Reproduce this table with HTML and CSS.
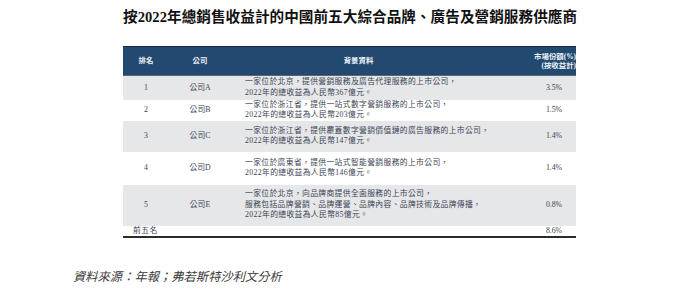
FILE: index.html
```html
<!DOCTYPE html>
<html lang="zh-Hant">
<head>
<meta charset="utf-8">
<link rel="stylesheet" href="styles.css">
</head>
<body>
<div class="page">
  <div class="block">
    <h1 class="title">按2022年總銷售收益計的中國前五大綜合品牌、廣告及營銷服務供應商</h1>
    <table class="tbl">
      <colgroup>
        <col class="c-rank"><col class="c-co"><col class="c-bg"><col class="c-share">
      </colgroup>
      <thead>
        <tr>
          <th class="ctr">排名</th>
          <th class="ctr">公司</th>
          <th class="ctr bg-h">背景資料</th>
          <th class="share-h">市場份額(%)<br>(按收益計)</th>
        </tr>
      </thead>
      <tbody>
        <tr class="gray h24">
          <td class="ctr">1</td><td class="ctr">公司A</td>
          <td class="desc">一家位於北京，提供營銷服務及廣告代理服務的上市公司，<br>2022年的總收益為人民幣367億元。</td>
          <td class="val">3.5%</td>
        </tr>
        <tr class="h21">
          <td class="ctr">2</td><td class="ctr">公司B</td>
          <td class="desc">一家位於浙江省，提供一站式數字營銷服務的上市公司，<br>2022年的總收益為人民幣203億元。</td>
          <td class="val">1.5%</td>
        </tr>
        <tr class="gray h31">
          <td class="ctr">3</td><td class="ctr">公司C</td>
          <td class="desc">一家位於浙江省，提供覆蓋數字營銷價值鏈的廣告服務的上市公司，<br>2022年的總收益為人民幣147億元。</td>
          <td class="val">1.4%</td>
        </tr>
        <tr class="h33">
          <td class="ctr">4</td><td class="ctr">公司D</td>
          <td class="desc">一家位於廣東省，提供一站式智能營銷服務的上市公司，<br>2022年的總收益為人民幣146億元。</td>
          <td class="val">1.4%</td>
        </tr>
        <tr class="gray h41">
          <td class="ctr">5</td><td class="ctr">公司E</td>
          <td class="desc">一家位於北京，向品牌商提供全面服務的上市公司，<br>服務包括品牌營銷、品牌運營、品牌內容、品牌技術及品牌傳播，<br>2022年的總收益為人民幣85億元。</td>
          <td class="val">0.8%</td>
        </tr>
        <tr class="total h11">
          <td class="lead">前五名</td><td></td><td></td>
          <td class="val">8.6%</td>
        </tr>
      </tbody>
    </table>
  </div>
  <p class="source">資料來源：年報；弗若斯特沙利文分析</p>
</div>
</body>
</html>
```
FILE: styles.css
```css
html, body {
  margin: 0;
  padding: 0;
  background: #ffffff;
}
body {
  font-family: "Liberation Serif", "Noto Sans CJK TC", serif;
  color: #3b4454;
}
.page {
  width: 686px;
  height: 297px;
  position: relative;
}
.block {
  margin-left: 123px;
  width: 453px;
  padding-top: 8px;
}
.title {
  margin: 0;
  font-size: 14.6px;
  line-height: 18px;
  font-weight: bold;
  color: #111111;
  text-align: center;
  white-space: nowrap;
  letter-spacing: 0.05px;
}
.tbl {
  margin-top: 20px;
  width: 453px;
  border-collapse: collapse;
  table-layout: fixed;
  font-size: 7.8px;
  line-height: 10.5px;
  border-bottom: 2px solid #2b2b2b;
}
.c-rank { width: 46px; }
.c-co { width: 62px; }
.c-bg { width: 295px; }
.c-share { width: 50px; }
.tbl thead tr {
  background: #224a70;
  height: 29px;
  border-top: 1px solid #1a2633;
  border-bottom: 1px solid #5b6470;
}
.tbl th {
  color: #eef2f7;
  font-weight: bold;
  padding: 0;
  vertical-align: middle;
  font-size: 7.4px;
  line-height: 9.5px;
}
.ctr { text-align: center; }
.bg-h { padding-right: 40px !important; }
.share-h { text-align: right; white-space: nowrap; }
.tbl td {
  padding: 0;
  vertical-align: middle;
}
.desc {
  padding-left: 14px !important;
  white-space: nowrap;
  letter-spacing: 0.35px;
}
.val {
  text-align: center;
  padding-left: 6px !important;
}
.gray { background: #e6e7e9; }
.h24 { height: 24px; }
.h21 { height: 21px; }
.h31 { height: 31px; }
.h33 { height: 33px; }
.h41 { height: 41px; }
.h11 { height: 11px; }
.total td { line-height: 10px; }
.lead { padding-left: 10px !important; letter-spacing: 0.5px; }
.source {
  margin: 0;
  position: absolute;
  left: 73px;
  top: 269px;
  font-size: 12.2px;
  line-height: 16px;
  font-style: italic;
  color: #3a3a3a;
  letter-spacing: 0.1px;
}
```
